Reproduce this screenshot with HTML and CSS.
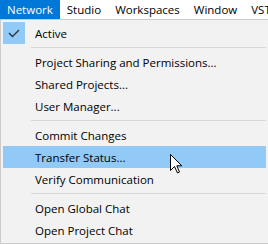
FILE: index.html
```html
<!DOCTYPE html>
<html lang="en">
<head>
  <meta charset="UTF-8">
  <title>Network Menu</title>
  <link rel="stylesheet" href="styles.css">
</head>
<body>
  <div class="menubar">
    <span class="bar-item open">Network</span>
    <span class="bar-item">Studio</span>
    <span class="bar-item">Workspaces</span>
    <span class="bar-item">Window</span>
    <span class="bar-item">VST Cloud</span>
  </div>

  <div class="menu">
    <div class="item">
      <span class="icon checked">
        <svg width="22" height="22" viewBox="0 0 22 22"><path d="M6 11 l3.5 3.5 l6.5 -6.5" fill="none" stroke="#333" stroke-width="1.4"/></svg>
      </span>
      <span class="label">Active</span>
    </div>
    <div class="sep"></div>
    <div class="item"><span class="icon"></span><span class="label">Project Sharing and Permissions...</span></div>
    <div class="item"><span class="icon"></span><span class="label">Shared Projects...</span></div>
    <div class="item"><span class="icon"></span><span class="label">User Manager...</span></div>
    <div class="sep"></div>
    <div class="item"><span class="icon"></span><span class="label">Commit Changes</span></div>
    <div class="item hover">
      <span class="icon"></span><span class="label">Transfer Status...</span>
      <svg class="cursor" width="13" height="20" viewBox="0 0 13 20"><path d="M0.5 0.5 L0.5 16.5 L4.5 12.5 L7.5 19 L9.5 18 L6.8 11.8 L11.8 11.8 Z" fill="#fff" stroke="#000" stroke-width="1" stroke-linejoin="miter"/></svg>
    </div>
    <div class="item"><span class="icon"></span><span class="label">Verify Communication</span></div>
    <div class="sep"></div>
    <div class="item"><span class="icon"></span><span class="label">Open Global Chat</span></div>
    <div class="item"><span class="icon"></span><span class="label">Open Project Chat</span></div>
  </div>
</body>
</html>
```

FILE: styles.css
```css
body {
  margin: 0;
  font-family: "Open Sans", "Noto Sans", sans-serif;
  font-size: 11.5px;
  color: #000;
  background-color: #fff;
  overflow: hidden;
}
.menubar {
  display: flex;
  height: 19px;
  line-height: 19px;
  white-space: nowrap;
  overflow: hidden;
  background-color: #fff;
}
.bar-item {
  padding: 0 7px;
}
.bar-item.open {
  background-color: #0078d7;
  color: #fff;
}
.menu {
  width: 263px;
  padding: 2px;
  border: 1px solid #cccccc;
  background-color: #f2f2f2;
}
.item {
  position: relative;
  display: flex;
  align-items: center;
  height: 22px;
}
.item.hover {
  background-color: #91c9f7;
}
.icon {
  width: 22px;
  height: 22px;
  margin-right: 10px;
}
.icon.checked {
  background-color: #91c9f7;
}
.icon svg {
  display: block;
}
.sep {
  height: 1px;
  margin: 3px 0 3px 28px;
  background-color: #d7d7d7;
}
.cursor {
  position: absolute;
  left: 167px;
  top: 8px;
}
```
